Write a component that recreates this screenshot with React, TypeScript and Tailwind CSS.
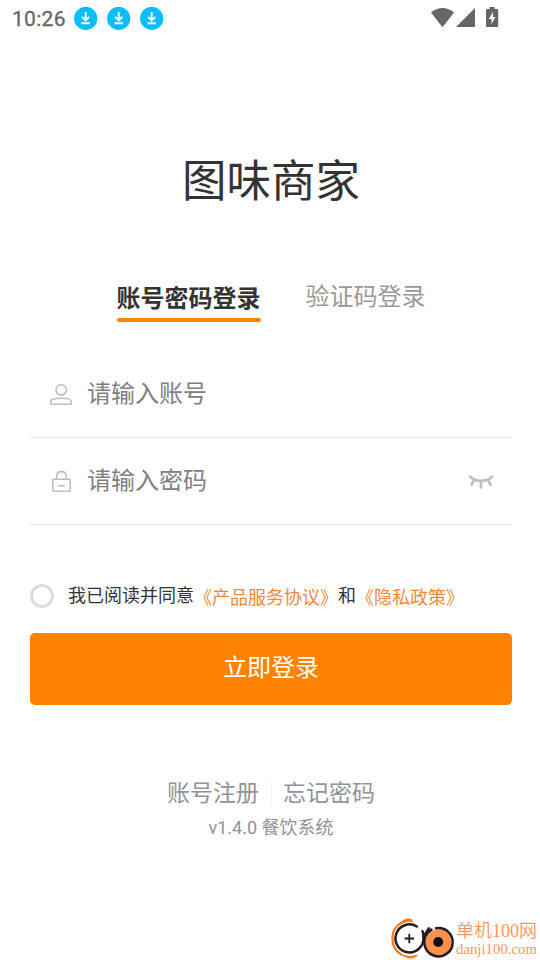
import React from 'react';

const DownloadBadge: React.FC = () => (
  <svg width="24" height="24" viewBox="0 0 24 24" fill="none">
    <circle cx="11.7" cy="11.4" r="11.6" fill="#05beff" />
    <path d="M11.7 4.9V13.2M8.1 9.9L11.7 13.5L15.3 9.9M7.4 16.3H16" stroke="#fff" strokeWidth="1.9" />
  </svg>
);

const StatusBar: React.FC = () => (
  <header className="flex h-[38px] items-center pl-3 pr-[42px]">
    <span className="w-[62px] text-[21px] leading-6 tracking-[0.3px] text-[#666] [-webkit-text-stroke:0.3px_#666]">10:26</span>
    <div className="flex gap-[9px]">
      <DownloadBadge />
      <DownloadBadge />
      <DownloadBadge />
    </div>
    <svg className="ml-auto overflow-visible" width="67" height="22" viewBox="0 0 67 22" fill="#666">
      <path d="M0 4.6C6.5-1.5 16.5-1.5 23 4.6L11.5 19.2Z" />
      <path d="M44 0V19H25Z" />
      <path
        fillRule="evenodd"
        d="M58.7 -1H63.7V1H65.7C66.7 1 67.2 1.6 67.2 2.5V17.5C67.2 18.5 66.7 19 65.7 19H56.5C55.5 19 55 18.5 55 17.5V2.5C55 1.6 55.5 1 56.5 1H58.7ZM62 4L57.8 11H60.5V16L64.5 9H62Z"
      />
    </svg>
  </header>
);

const UserIcon: React.FC = () => (
  <svg className="translate-y-px" width="24" height="24" viewBox="0 0 24 24" fill="none" stroke="#bfbfbf" strokeWidth="1.6">
    <circle cx="12.2" cy="6.9" r="5.2" />
    <path d="M1.8 21.2V18.2C1.8 16.4 6 15.2 12 15.2C18 15.2 22.2 16.4 22.2 18.2V21.2Z" strokeLinejoin="round" />
  </svg>
);

const LockIcon: React.FC = () => (
  <svg className="translate-y-px" width="24" height="24" viewBox="0 0 24 24" fill="none" stroke="#bfbfbf" strokeWidth="1.6">
    <rect x="3.8" y="9.2" width="17.4" height="12" rx="0.6" />
    <path d="M7.6 9.2V6.6C7.6 3.6 9.6 1.6 12.4 1.6C15.2 1.6 17.2 3.6 17.2 6.6V9.2M9 15.9H15.8" />
  </svg>
);

const ClosedEyeIcon: React.FC = () => (
  <svg className="translate-y-px" width="26" height="18" viewBox="0 0 26 18" fill="none" stroke="#bfbfbf" strokeWidth="2.7" strokeLinecap="round">
    <path d="M2.3 3.7C8 9.3 18 9.3 23.8 3.7M5.7 7.5L3.5 11.8M13 8.5V14.4M20.3 7.5L22.6 11.8" />
  </svg>
);

interface FieldProps {
  icon: React.ReactNode;
  placeholder: string;
  type?: string;
  action?: React.ReactNode;
}

const Field: React.FC<FieldProps> = ({ icon, placeholder, type = 'text', action }) => (
  <label className="flex h-[87px] items-center border-b border-[#e5e5e5] pl-[19px] pr-[18px]">
    {icon}
    <input
      type={type}
      placeholder={placeholder}
      className="ml-[14px] h-9 min-w-0 flex-1 text-2xl leading-9 text-[#333] outline-none placeholder:text-[#808080]"
    />
    {action}
  </label>
);

const SiteMark: React.FC = () => (
  <div className="absolute left-[391px] top-[917px] flex">
    <svg width="64" height="43" viewBox="0 0 64 43" fill="none">
      <path d="M14 4.5C5 7.5 1.4 14 1.4 21.5C1.4 29 4.5 34.5 11 38" stroke="#ff7a1a" strokeWidth="2.2" />
      <path d="M8 6.5C11 2.5 17 .2 20.5 2L22.5 5.4C17 4 12 5.5 8 8.5Z" fill="#ff7a1a" />
      <path d="M8 35.5C14 39.5 20 39.8 27 37.5C24 43.2 14 43 8 35.5Z" fill="#ff7a1a" />
      <path
        d="M25.8 9.5A14 14 0 1 0 32.4 20C32.6 18 32.2 15.8 31.5 14.2"
        stroke="#231b1d"
        strokeWidth="2.5"
        strokeLinecap="round"
      />
      <path d="M18.3 16.8V26.2M13.6 21.5H23" stroke="#231b1d" strokeWidth="1.8" />
      <circle cx="47.5" cy="25.3" r="13" fill="#ff914d" />
      <path
        d="M45 11.2A14.2 14.2 0 1 1 36.5 16.2M33 19L37.8 11.3M36.5 16.2L40.5 12.5"
        stroke="#231b1d"
        strokeWidth="2.5"
        strokeLinecap="round"
      />
      <circle cx="47.2" cy="25" r="5" fill="#160f12" />
    </svg>
    <div className="ml-px whitespace-nowrap font-['Liberation_Serif','Noto_Sans_CJK_SC',serif] text-[#ff965c]">
      <p className="mt-[3px] text-[18px] leading-[22px] font-[350]">单机100网</p>
      <p className="text-[14.8px] leading-[14px]">danji100.com</p>
    </div>
  </div>
);

export default function App() {
  return (
    <div className="relative h-[960px] w-[540px] overflow-hidden bg-white font-['Roboto','Noto_Sans_CJK_SC',sans-serif]">
      <StatusBar />

      <main className="flex flex-col pl-[30px] pr-7">
        <h1 className="mt-[114px] text-center text-[44.5px] leading-[60px] text-[#333]">图味商家</h1>

        <div className="mt-[68px] flex h-[42px] justify-center gap-[45px] text-2xl">
          <button className="flex flex-col font-bold text-[#333]">
            <span className="h-[38px] leading-[38px]">账号密码登录</span>
            <span className="h-1 w-full rounded-full bg-[#ff8200]" />
          </button>
          <button className="h-[34px] leading-[34px] text-[#999]">验证码登录</button>
        </div>

        <div className="mt-[29px]">
          <Field icon={<UserIcon />} placeholder="请输入账号" />
          <Field icon={<LockIcon />} placeholder="请输入密码" type="password" action={<ClosedEyeIcon />} />
        </div>

        <div className="mt-[58px] flex h-[26px] items-center whitespace-nowrap text-lg leading-[26px] text-[#333]">
          <span className="mr-[14px] size-6 rounded-full border-[3px] border-[#dcdcdc]" />
          <span>我已阅读并同意</span>
          <a className="pt-1 text-[#f0883a]">《产品服务协议》</a>
          <span>和</span>
          <a className="pt-1 text-[#f0883a]">《隐私政策》</a>
        </div>

        <button className="mt-6 h-[72px] rounded-[5px] bg-[#ff8200] pb-0.5 text-2xl text-white">立即登录</button>

        <div className="mt-[73px] flex h-8 items-center justify-center text-[23px] leading-8 text-[#909399]">
          <a>账号注册</a>
          <span className="mx-[11.5px] h-6 w-px bg-[#f3f4f5]" />
          <a>忘记密码</a>
        </div>
        <p className="mt-[6px] text-center text-lg leading-6 text-[#909399]">v1.4.0 餐饮系统</p>
      </main>

      <SiteMark />
    </div>
  );
}
